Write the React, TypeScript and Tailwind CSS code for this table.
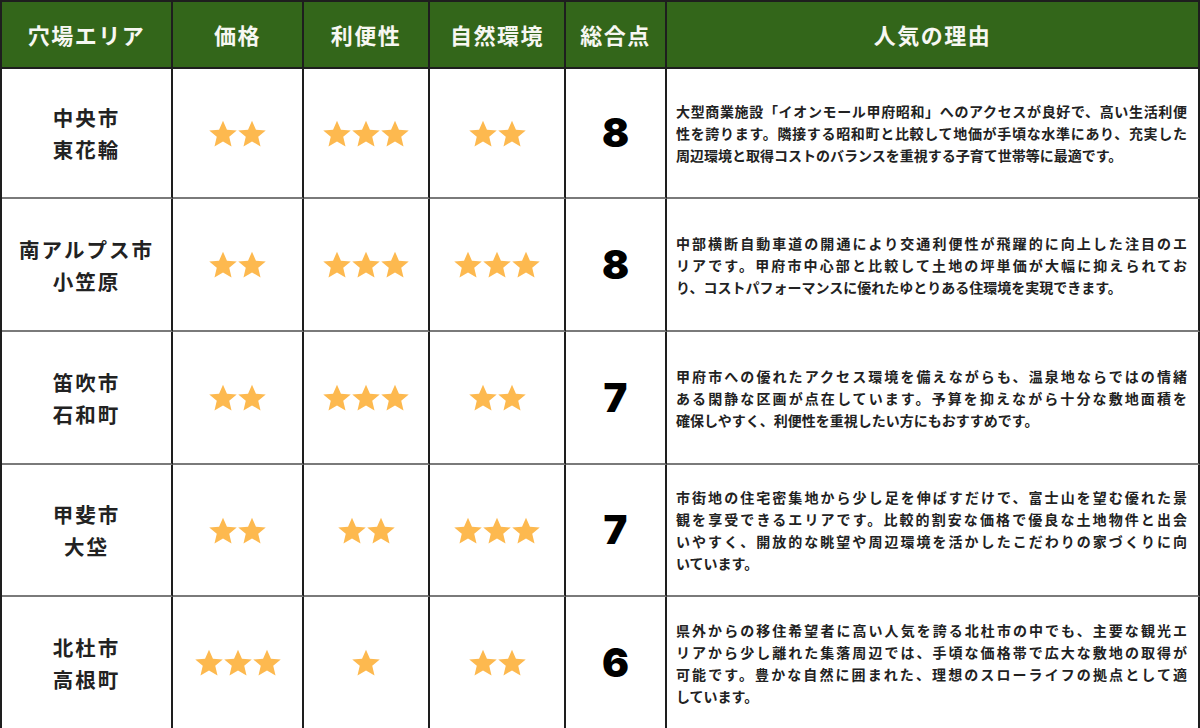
const rows = [
  {
    area: ["中央市", "東花輪"],
    price: 2,
    convenience: 3,
    nature: 2,
    score: 8,
    reason: [
      "大型商業施設「イオンモール甲府昭和」へのアクセスが良好で、高い生活利便",
      "性を誇ります。隣接する昭和町と比較して地価が手頃な水準にあり、充実した",
      "周辺環境と取得コストのバランスを重視する子育て世帯等に最適です。",
    ],
  },
  {
    area: ["南アルプス市", "小笠原"],
    price: 2,
    convenience: 3,
    nature: 3,
    score: 8,
    reason: [
      "中部横断自動車道の開通により交通利便性が飛躍的に向上した注目のエ",
      "リアです。甲府市中心部と比較して土地の坪単価が大幅に抑えられてお",
      "り、コストパフォーマンスに優れたゆとりある住環境を実現できます。",
    ],
  },
  {
    area: ["笛吹市", "石和町"],
    price: 2,
    convenience: 3,
    nature: 2,
    score: 7,
    reason: [
      "甲府市への優れたアクセス環境を備えながらも、温泉地ならではの情緒",
      "ある閑静な区画が点在しています。予算を抑えながら十分な敷地面積を",
      "確保しやすく、利便性を重視したい方にもおすすめです。",
    ],
  },
  {
    area: ["甲斐市", "大垈"],
    price: 2,
    convenience: 2,
    nature: 3,
    score: 7,
    reason: [
      "市街地の住宅密集地から少し足を伸ばすだけで、富士山を望む優れた景",
      "観を享受できるエリアです。比較的割安な価格で優良な土地物件と出会",
      "いやすく、開放的な眺望や周辺環境を活かしたこだわりの家づくりに向",
      "いています。",
    ],
  },
  {
    area: ["北杜市", "高根町"],
    price: 3,
    convenience: 1,
    nature: 2,
    score: 6,
    reason: [
      "県外からの移住希望者に高い人気を誇る北杜市の中でも、主要な観光エ",
      "リアから少し離れた集落周辺では、手頃な価格帯で広大な敷地の取得が",
      "可能です。豊かな自然に囲まれた、理想のスローライフの拠点として適",
      "しています。",
    ],
  },
];

const headers = ["穴場エリア", "価格", "利便性", "自然環境", "総合点", "人気の理由"];

function Stars({ count }: { count: number }) {
  return (
    <div className="flex items-center gap-[1px]">
      {Array.from({ length: count }).map((_, i) => (
        <svg key={i} viewBox="1 1.2 22 21" className="w-[28px] h-[27px]">
          <path
            d="M12 1.6l3.1 7.1 7.7.6-5.9 5 1.8 7.6L12 17.9l-6.7 4 1.8-7.6-5.9-5 7.7-.6z"
            fill="#fdb94f"
          />
        </svg>
      ))}
    </div>
  );
}

const cell =
  "flex items-center justify-center border-r-2 border-b-2 border-r-[#1e1e1e] border-b-[#7a7a7a] bg-white";

export default function App() {
  return (
    <div
      className="w-[1200px] h-[728px] grid grid-cols-[171px_131px_126px_136px_101px_1fr] grid-rows-[67px_130px_133px_133px_132px_133px] border-l-2 border-t-2 border-[#1e1e1e] text-[#222]"
      style={{ fontFamily: '"Noto Sans CJK JP", "Noto Sans", sans-serif' }}
    >
      {headers.map((h) => (
        <div
          key={h}
          className="flex items-center justify-center bg-[#33661a] border-r-2 border-b-2 border-[#1e1e1e] text-[#f7f7f2] text-[22px] font-bold tracking-[1.5px]"
        >
          {h}
        </div>
      ))}
      {rows.map((r) => (
        <div key={r.area[0]} className="contents">
          <div className={`${cell} flex-col text-[20.5px] font-bold leading-[32px] tracking-[2px]`}>
            <span>{r.area[0]}</span>
            <span>{r.area[1]}</span>
          </div>
          <div className={cell}>
            <Stars count={r.price} />
          </div>
          <div className={cell}>
            <Stars count={r.convenience} />
          </div>
          <div className={cell}>
            <Stars count={r.nature} />
          </div>
          <div className={cell}>
            <span
              className="text-[40px] font-black text-black leading-none"
              style={{ fontFamily: "Inter, sans-serif" }}
            >
              {r.score}
            </span>
          </div>
          <div className={`${cell} justify-start pl-[9px] pr-[11px]`}>
            <div className="w-full text-[14px] font-bold leading-[22px]">
              {r.reason.map((line, i) =>
                i < r.reason.length - 1 ? (
                  <div key={i} className="whitespace-nowrap text-justify [text-align-last:justify]">
                    {line}
                  </div>
                ) : (
                  <div key={i} className="whitespace-nowrap">
                    {line}
                  </div>
                )
              )}
            </div>
          </div>
        </div>
      ))}
    </div>
  );
}
